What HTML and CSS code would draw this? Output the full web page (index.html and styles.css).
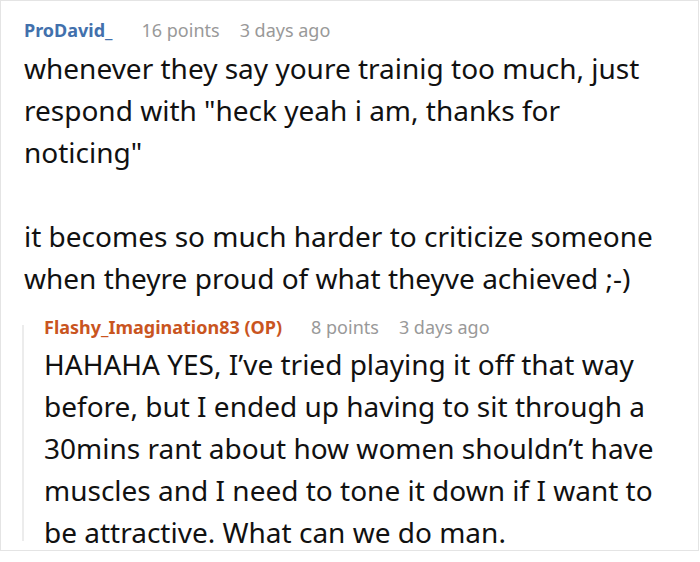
FILE: index.html
```html
<!DOCTYPE html>
<html lang="en">
<head>
  <meta charset="UTF-8" />
  <title>Comment thread</title>
  <link rel="stylesheet" href="styles.css">
</head>
<body>
  <div class="thread">
    <div class="comment">
      <div class="meta">
        <span class="author">ProDavid_</span>
        <span class="info">16 points</span>
        <span class="info">3 days ago</span>
      </div>
      <div class="text">
        <p>whenever they say youre trainig too much, just respond with "heck yeah i am, thanks for noticing"</p>
        <p>it becomes so much harder to criticize someone when theyre proud of what theyve achieved ;-)</p>
      </div>

      <div class="reply">
        <div class="meta">
          <span class="author op">Flashy_Imagination83 (OP)</span>
          <span class="info">8 points</span>
          <span class="info">3 days ago</span>
        </div>
        <div class="text">
          <p>HAHAHA YES, I’ve tried playing it off that way before, but I ended up having to sit through a 30mins rant about how women shouldn’t have muscles and I need to tone it down if I want to be attractive. What can we do man.</p>
        </div>
      </div>
    </div>
  </div>
</body>
</html>
```

FILE: styles.css
```css
* {
  box-sizing: border-box;
}

body {
  margin: 0;
  background: #fff;
  font-family: "Noto Sans", "Open Sans", sans-serif;
  color: #111;
}

.thread {
  width: 699px;
  height: 551px;
  border: 1px solid #e4e4e4;
  padding: 17px 20px 0 23px;
}

.meta {
  display: flex;
  gap: 20px;
  font-size: 18px;
  line-height: 24px;
  margin-bottom: 5px;
}

.author {
  font-weight: 700;
  color: #4270ac;
  margin-right: 9px;
}

.author.op {
  color: #c9551f;
}

.info {
  color: #999;
}

.text {
  font-size: 28px;
  line-height: 42px;
}

.text p {
  margin: 0;
}

.text p + p {
  margin-top: 42px;
}

.reply {
  position: relative;
  margin-top: 16px;
  padding-left: 20px;
}

.reply::before {
  content: "";
  position: absolute;
  left: -2px;
  top: 10px;
  bottom: 12px;
  border-left: 2px solid #ececec;
}

.reply .meta {
  margin-bottom: 4px;
}
```
